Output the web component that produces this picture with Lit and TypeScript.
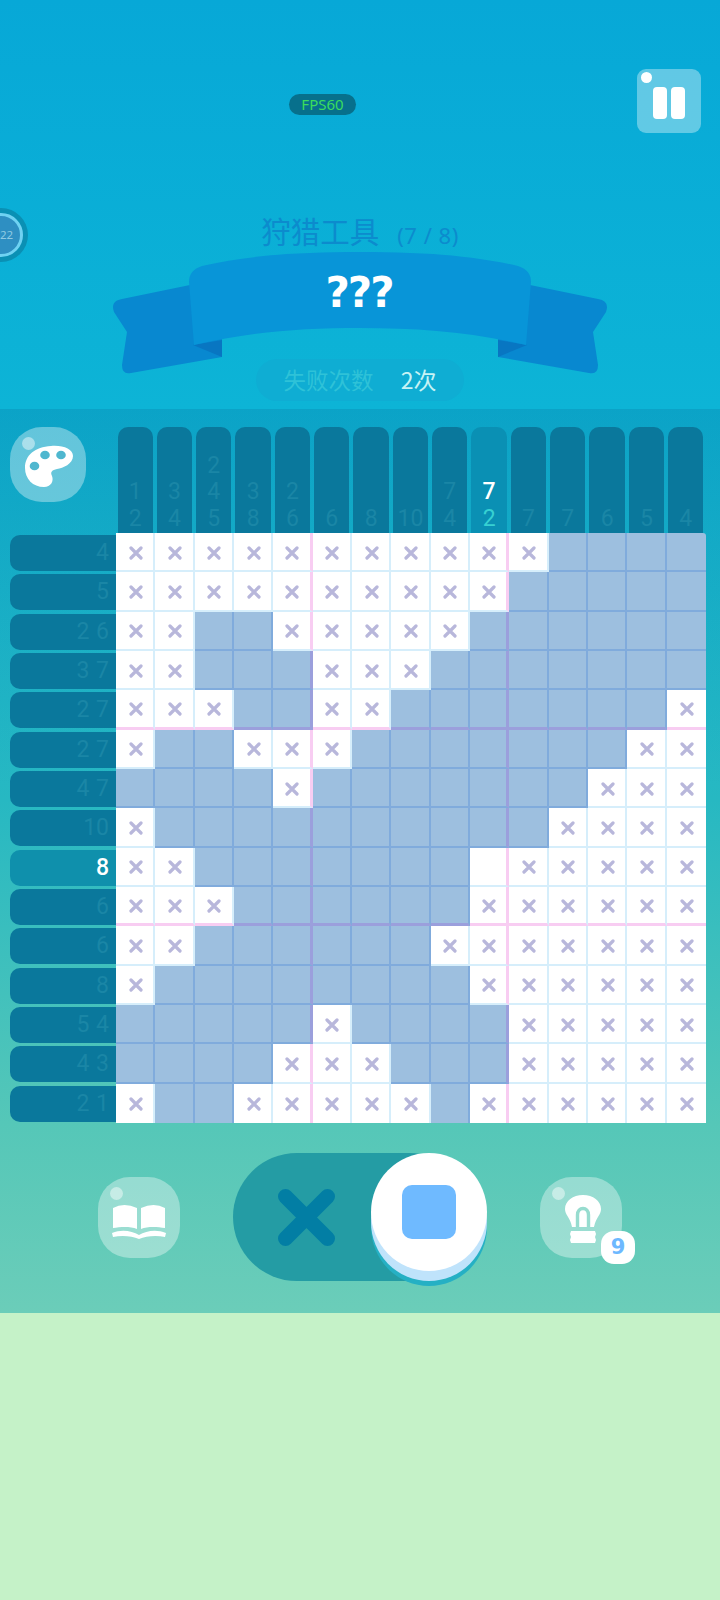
import { LitElement, html, css, svg } from 'lit';
import { customElement } from 'lit/decorators.js';
import { classMap } from 'lit/directives/class-map.js';

const COL_HINTS = [[1, 2], [3, 4], [2, 4, 5], [3, 8], [2, 6], [6], [8], [10], [7, 4], [7, 2], [7], [7], [6], [5], [4]];
const ROW_HINTS = ['4', '5', '2 6', '3 7', '2 7', '2 7', '4 7', '10', '8', '6', '6', '8', '5 4', '4 3', '2 1'];
const ACTIVE_COL = 9;
const ACTIVE_ROW = 8;

// x = crossed out, b = filled blue, _ = still empty
const GRID = [
  'xxxxxxxxxxxbbbb',
  'xxxxxxxxxxbbbbb',
  'xxbbxxxxxbbbbbb',
  'xxbbbxxxbbbbbbb',
  'xxxbbxxbbbbbbbx',
  'xbbxxxbbbbbbbxx',
  'bbbbxbbbbbbbxxx',
  'xbbbbbbbbbbxxxx',
  'xxbbbbbbb_xxxxx',
  'xxxbbbbbbxxxxxx',
  'xxbbbbbbxxxxxxx',
  'xbbbbbbbbxxxxxx',
  'bbbbbxbbbbxxxxx',
  'bbbbxxxbbbxxxxx',
  'xbbxxxxxbxxxxxx',
];

const cross = svg`<svg class="cross" viewBox="0 0 14 14"><path d="M2 2 12 12M12 2 2 12"/></svg>`;

@customElement('app-root')
export class AppRoot extends LitElement {
  static styles = css`
    :host {
      display: block;
      width: 720px;
      height: 1600px;
      overflow: hidden;
      background: #c5f2c8;
      font-family: Roboto, "Noto Sans CJK SC", sans-serif;
    }

    .game {
      height: 1313px;
      background: linear-gradient(#07a8d7 0, #0db4d6 409px, #27b8c2 800px, #55c7b8 1123px, #6bcdb9 1313px);
    }

    .top {
      position: relative;
      height: 409px;
      display: flex;
      flex-direction: column;
      align-items: center;
      box-sizing: border-box;
    }

    .hud {
      align-self: stretch;
      display: flex;
      justify-content: space-between;
      align-items: flex-start;
      padding: 69px 19px 0 289px;
    }

    .fps {
      margin-top: 25px;
      width: 67px;
      height: 21px;
      border-radius: 11px;
      background: #07708c;
      color: #3bdc5c;
      font: 15px/21px "Noto Sans", sans-serif;
      text-align: center;
    }

    .glass {
      position: relative;
      background: rgba(255, 255, 255, 0.36);
      display: flex;
      align-items: center;
      justify-content: center;
      flex: none;
    }

    .glass::before {
      content: "";
      position: absolute;
      left: 12px;
      top: 10px;
      width: 13px;
      height: 13px;
      border-radius: 50%;
      background: rgba(255, 255, 255, 0.45);
    }

    .pause {
      width: 64px;
      height: 64px;
      border-radius: 9px;
      gap: 4px;
      padding-top: 4px;
      box-sizing: border-box;
    }

    .pause::before {
      left: 4px;
      top: 3px;
      width: 11px;
      height: 11px;
      background: #fff;
    }

    .pause i {
      width: 14px;
      height: 32px;
      border-radius: 4px;
      background: #fff;
    }

    .timer {
      position: absolute;
      left: -26px;
      top: 208px;
      width: 54px;
      height: 54px;
    }

    .timer text {
      font: 11.5px "Noto Sans", sans-serif;
      fill: #8fcbe2;
    }

    .title {
      margin-top: 78px;
      height: 41px;
      display: flex;
      align-items: flex-start;
      color: #0c8bcd;
      font: 400 29.5px/38px "Noto Sans CJK SC", sans-serif;
    }

    .title small {
      margin: 9px 0 0 18px;
      font: 22px/30px "Noto Sans", sans-serif;
      letter-spacing: 0.5px;
    }

    .ribbon {
      position: relative;
      width: 500px;
      height: 107px;
      flex: none;
    }

    .ribbon svg {
      display: block;
      width: 500px;
      height: 122px;
      overflow: visible;
    }

    .ribbon span {
      position: absolute;
      left: 0;
      right: 2px;
      top: 15px;
      text-align: center;
      color: #fff;
      font: 700 42px/52px "DejaVu Sans", sans-serif;
      letter-spacing: -2px;
    }

    .fails {
      position: relative;
      width: 208px;
      height: 42px;
      box-sizing: border-box;
      padding-bottom: 3px;
      border-radius: 21px;
      background: #0fadd3;
      display: flex;
      align-items: center;
      justify-content: center;
      gap: 27px;
      font: 22.5px/38px "Noto Sans CJK SC", sans-serif;
      color: #2ec2d8;
    }

    .fails b {
      font-weight: 400;
      font-size: 23px;
      color: #c6f3f5;
    }

    .board {
      height: 715px;
      box-sizing: border-box;
      padding-top: 18px;
      background: linear-gradient(rgba(0, 60, 110, 0.14), rgba(0, 60, 110, 0) 380px);
      display: grid;
      grid-template-columns: 116px 590px;
      grid-template-rows: 106px 590px;
    }

    .palette {
      width: 76px;
      height: 75px;
      margin-left: 9.5px;
      border-radius: 32px;
    }

    .palette svg {
      width: 48px;
      height: 42px;
      margin: 3px 0 0 2px;
    }

    .col-hints {
      display: grid;
      grid-template-columns: repeat(15, 1fr);
    }

    .col-hint {
      margin: 0 2.5px 0 1.5px;
      border-radius: 10px 10px 0 0;
      background: #0a789c;
      color: #1a86a6;
      display: flex;
      flex-direction: column;
      justify-content: flex-end;
      align-items: center;
      font-size: 23px;
      line-height: 26.5px;
      padding-bottom: 1px;
    }

    .col-hint.on {
      background: #0a90b4;
      color: #37d0d2;
    }

    .col-hint.on span:first-child {
      color: #fff;
      font-weight: 500;
    }

    .row-hints {
      display: grid;
      grid-template-rows: repeat(15, 1fr);
    }

    .row-hint {
      margin: 2px 0 1.3px 9.5px;
      border-radius: 10px 0 0 10px;
      background: #0a789c;
      color: #1a86a6;
      font-size: 23px;
      line-height: 36px;
      text-align: right;
      padding-right: 7px;
      word-spacing: 1px;
    }

    .row-hint.on {
      background: #0f90ac;
      color: #fff;
      font-weight: 500;
    }

    .grid {
      display: grid;
      grid-template-columns: repeat(15, 1fr);
      grid-template-rows: repeat(15, 1fr);
      border-top-right-radius: 3px;
      overflow: hidden;
    }

    .cell {
      display: flex;
      align-items: center;
      justify-content: center;
      box-sizing: border-box;
      padding: 2px 0 0 2px;
      background: #fff;
      border-right: 2px solid #d6eefb;
      border-bottom: 2px solid #d6eefb;
    }

    .cell.b {
      background: #9dbfdf;
      border-color: #80abdc;
    }

    .cell.last-col {
      border-right: 0;
    }

    .cell.last-row {
      border-bottom: 0;
    }

    .cell.th-col {
      border-right: 3px solid #f8cdf2;
    }

    .cell.th-row {
      border-bottom: 3px solid #f8cdf2;
    }

    .cell.b.th-col {
      border-right-color: #9b9fdc;
    }

    .cell.b.th-row {
      border-bottom-color: #9b9fdc;
    }

    .cross {
      width: 14px;
      height: 14px;
      fill: none;
      stroke: #b8b7db;
      stroke-width: 3.2;
      stroke-linecap: round;
    }

    .tools {
      display: flex;
      align-items: center;
      padding: 29px 0 0 98px;
      gap: 53px;
    }

    .tool {
      width: 82px;
      height: 81px;
      border-radius: 32px;
    }

    .tool.book svg {
      width: 54px;
      height: 38px;
      margin-top: 7px;
    }

    .tool.hint svg {
      width: 40px;
      height: 50px;
      margin: 3px 0 0 4px;
    }

    .badge {
      position: absolute;
      right: -13px;
      bottom: -6px;
      width: 34px;
      height: 33px;
      border-radius: 13px;
      background: #fff;
      color: #6db8ff;
      font: 700 21px/33px "DejaVu Sans", sans-serif;
      text-align: center;
    }

    .toggle {
      position: relative;
      width: 254px;
      height: 128px;
      flex: none;
    }

    .track {
      width: 240px;
      height: 128px;
      border-radius: 64px;
      background: #249ca4;
      display: flex;
      align-items: center;
      padding-left: 45px;
      box-sizing: border-box;
    }

    .track svg {
      width: 57px;
      height: 57px;
    }

    .knob {
      position: absolute;
      right: 0;
      top: 0;
      width: 116px;
      height: 118px;
      border-radius: 50%;
      background: #fff;
      box-shadow: 0 10px 0 #bfe3fb, 0 15px 0 #25b0c4;
      display: flex;
      align-items: center;
      justify-content: center;
    }

    .knob i {
      width: 54px;
      height: 54px;
      border-radius: 10px;
      background: #6fbaff;
    }
  `;

  private renderTop() {
    return html`
      <div class="top">
        <div class="hud">
          <div class="fps">FPS60</div>
          <div class="glass pause"><i></i><i></i></div>
        </div>
        <svg class="timer" viewBox="0 0 54 54">
          <circle cx="27" cy="27" r="27" fill="#0a90b4" />
          <circle cx="27" cy="27" r="20.5" fill="#2e8fc2" stroke="#6fd2f2" stroke-width="3" />
          <text x="26" y="31">22</text>
        </svg>
        <div class="title">狩猎工具<small>(7 / 8)</small></div>
        <div class="ribbon">
          <svg viewBox="0 0 500 122">
            <g>
              <path fill="#0888d0" d="M80 33 12 47Q0 49 4 60L17 80 12 113Q12 123 21 121L112 105V60Z" />
              <path fill="#0876c2" d="M83 93 112 88V105Z" />
            </g>
            <g transform="matrix(-1 0 0 1 500 0)">
              <path fill="#0888d0" d="M80 33 12 47Q0 49 4 60L17 80 12 113Q12 123 21 121L112 105V60Z" />
              <path fill="#0876c2" d="M83 93 112 88V105Z" />
            </g>
            <path fill="#0895d8" d="M79 30Q79 18 92 14C140 3 190 0 250 0S360 3 408 14Q421 18 421 30L416 93C360 80 310 76 250 76S140 80 84 93Z" />
          </svg>
          <span>???</span>
        </div>
        <div class="fails">失败次数<b>2次</b></div>
      </div>
    `;
  }

  private renderBoard() {
    return html`
      <div class="board">
        <div class="glass palette">
          <svg viewBox="0 0 48 42">
            <path fill="#fff" d="M0 23C0 10 10 2 26 1 38 0 48 4 48 11 48 19 38 23 32 24 27 25 25 27 27 31 29 36 26 42 19 42 8 42 0 34 0 23Z" />
            <ellipse cx="9.5" cy="21" rx="4.8" ry="4.3" fill="#4fb7cf" />
            <ellipse cx="20" cy="10" rx="4.8" ry="4.3" fill="#4fb7cf" />
            <ellipse cx="36" cy="10" rx="4.8" ry="4.3" fill="#4fb7cf" />
          </svg>
        </div>
        <div class="col-hints">
          ${COL_HINTS.map(
            (nums, i) => html`<div class="col-hint ${classMap({ on: i === ACTIVE_COL })}">
              ${nums.map((n) => html`<span>${n}</span>`)}
            </div>`
          )}
        </div>
        <div class="row-hints">
          ${ROW_HINTS.map(
            (t, i) => html`<div class="row-hint ${classMap({ on: i === ACTIVE_ROW })}">${t}</div>`
          )}
        </div>
        <div class="grid">
          ${GRID.map((row, r) =>
            [...row].map((c, k) => {
              const classes = {
                cell: true,
                b: c === 'b',
                'th-col': k === 4 || k === 9,
                'th-row': r === 4 || r === 9,
                'last-col': k === 14,
                'last-row': r === 14,
              };
              return html`<div class=${classMap(classes)}>${c === 'x' ? cross : ''}</div>`;
            })
          )}
        </div>
      </div>
    `;
  }

  private renderTools() {
    return html`
      <div class="tools">
        <div class="glass tool book">
          <svg viewBox="0 0 54 38" fill="#fff">
            <path d="M1 6Q12 0 25 6V27C18 24 8 25 1 26Z" />
            <path d="M53 6Q42 0 29 6V27C36 24 46 25 53 26Z" />
            <path d="M0 31C10 27 20 29 27 33 34 29 44 27 54 31L53 35C44 33 34 34 27 37 20 34 10 33 1 35Z" />
          </svg>
        </div>
        <div class="toggle">
          <div class="track">
            <svg viewBox="0 0 57 57">
              <path d="M7.5 7.5 49.5 49.5M49.5 7.5 7.5 49.5" fill="none" stroke="#027ea4" stroke-width="15" stroke-linecap="round" />
            </svg>
          </div>
          <div class="knob"><i></i></div>
        </div>
        <div class="glass tool hint">
          <svg viewBox="0 0 38 50">
            <path fill="#fff" d="M19 1C29 1 37 7 37 15 37 21 32 23 30 33H8C6 23 1 21 1 15 1 7 9 1 19 1Z" />
            <path fill="none" stroke="#97dccf" stroke-width="3.4" d="M13.5 33V21C13.5 17 16 14.5 19 14.5S24.5 17 24.5 21V33" />
            <path fill="#fff" d="M7 37H31L32 40 31 43 32 46 31 49H7L6 46 7 43 6 40Z" />
          </svg>
          <div class="badge">9</div>
        </div>
      </div>
    `;
  }

  render() {
    return html`<div class="game">${this.renderTop()}${this.renderBoard()}${this.renderTools()}</div>`;
  }
}
